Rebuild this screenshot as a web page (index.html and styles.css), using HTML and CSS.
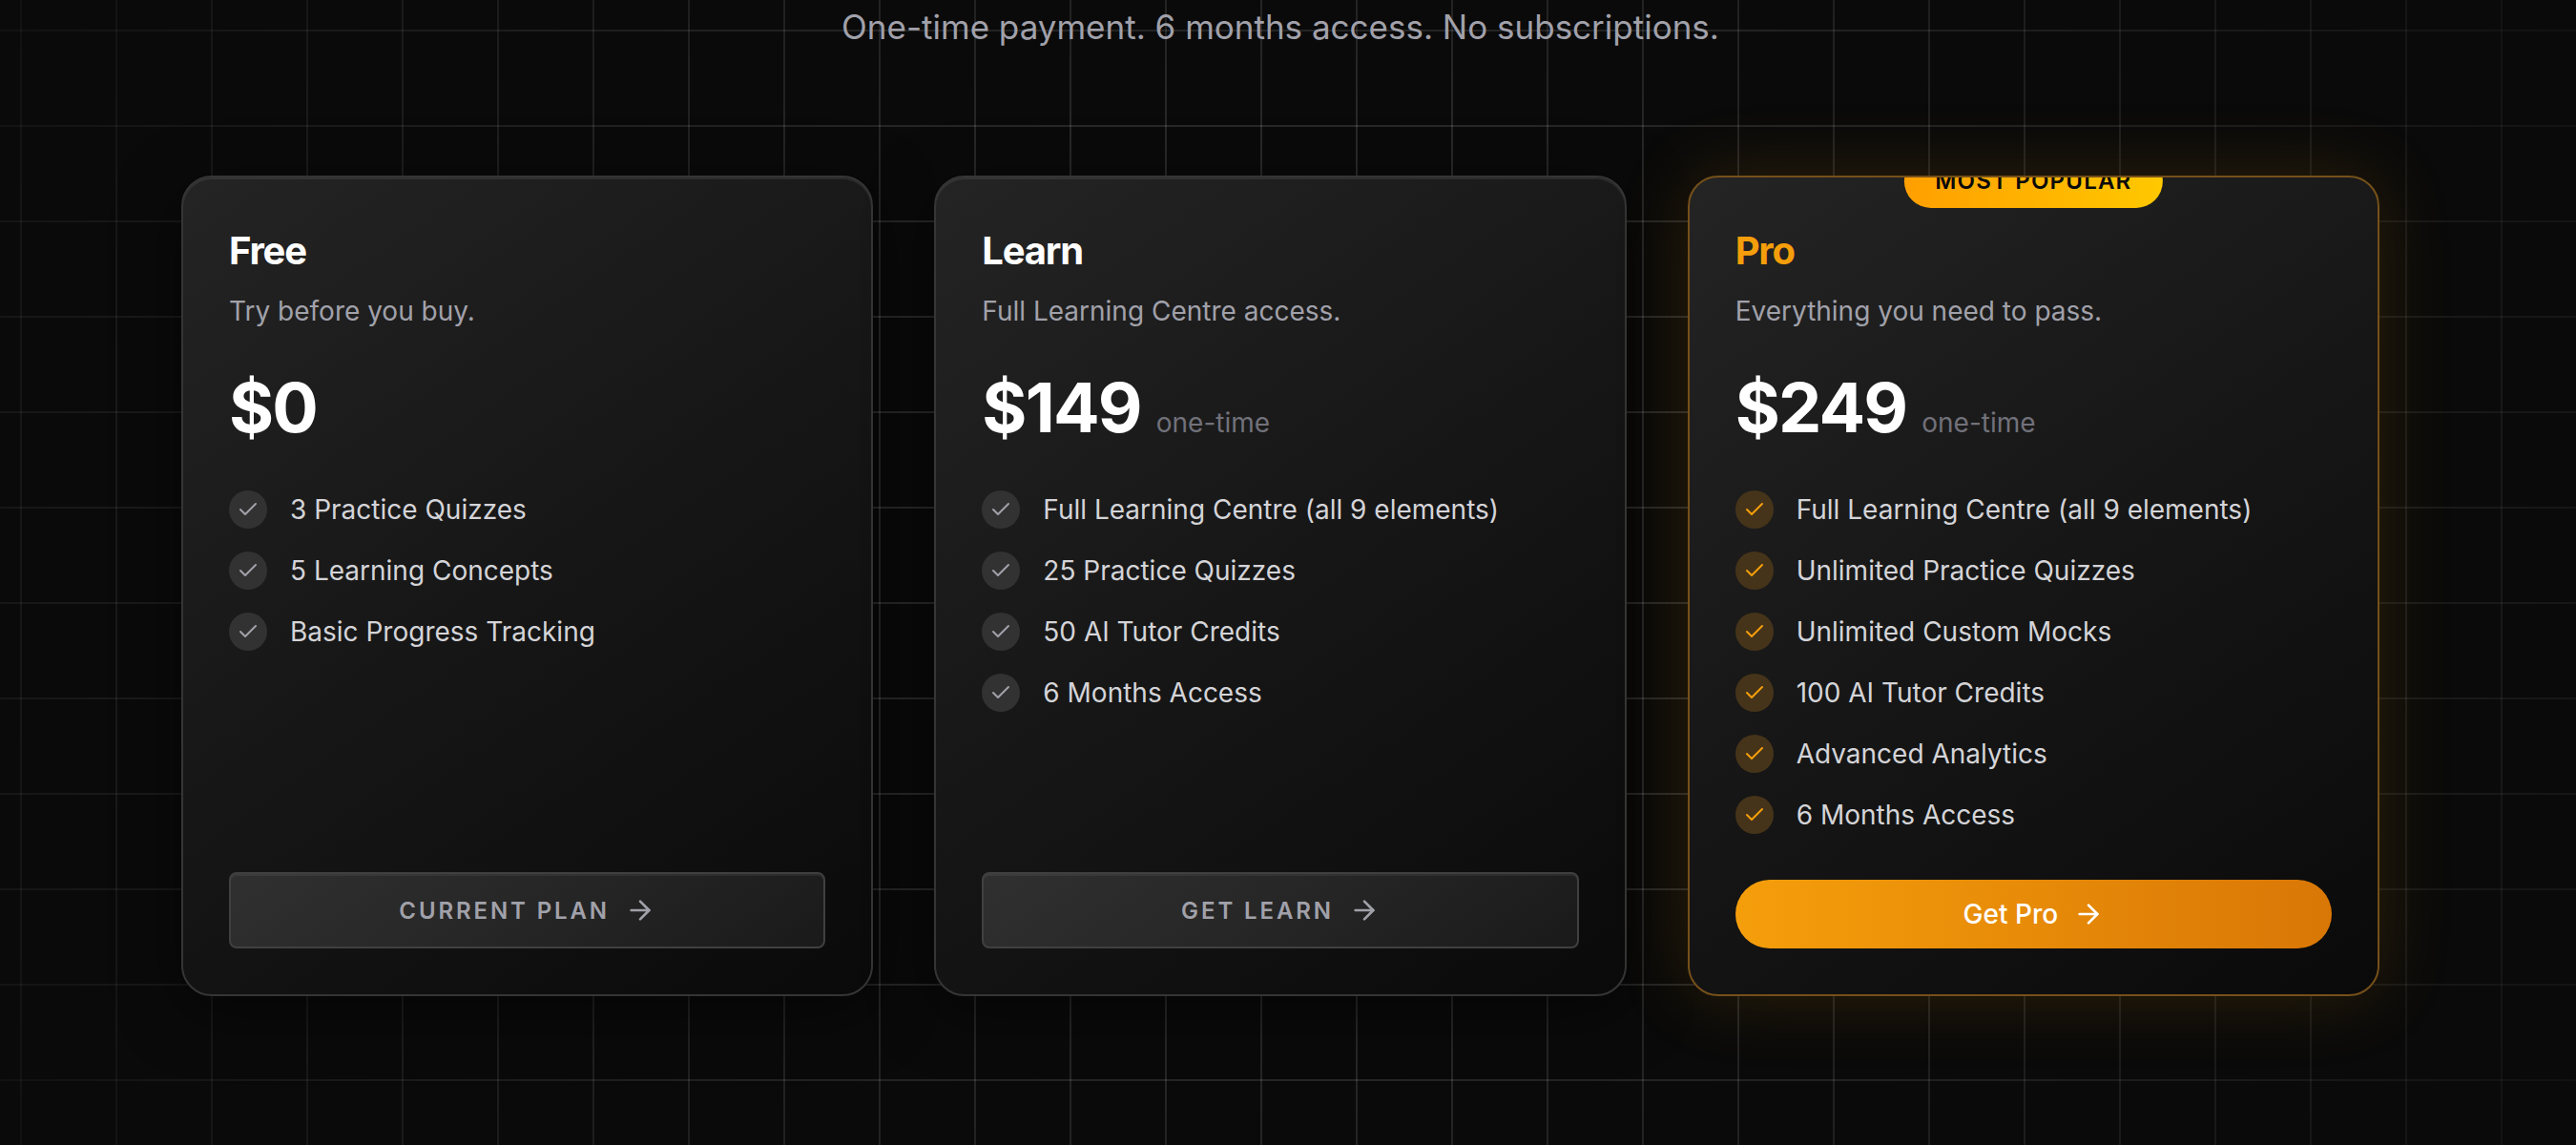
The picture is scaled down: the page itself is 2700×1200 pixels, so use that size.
FILE: index.html
```html
<!DOCTYPE html>
<html lang="en">
  <head>
    <meta charset="utf-8">
    <title>Pricing</title>
    <link rel="stylesheet" href="styles.css">
  </head>
  <body>
    <!-- shared icons -->
    <svg class="sprite" aria-hidden="true">
      <symbol id="check" viewBox="0 0 24 24"><path d="M20 6 9 17l-5-5"/></symbol>
      <symbol id="arrow" viewBox="0 0 24 24"><path d="M5 12h14"/><path d="m12 5 7 7-7 7"/></symbol>
    </svg>
    <main class="pricing">
      <p class="intro">One-time payment. 6 months access. No subscriptions.</p>
      <div class="plans">
        <section class="card">
          <h2>Free</h2>
          <p class="tagline">Try before you buy.</p>
          <p class="price">$0</p>
          <ul class="features">
            <li><span class="tick"><svg><use href="#check"/></svg></span>3 Practice Quizzes</li>
            <li><span class="tick"><svg><use href="#check"/></svg></span>5 Learning Concepts</li>
            <li><span class="tick"><svg><use href="#check"/></svg></span>Basic Progress Tracking</li>
          </ul>
          <button type="button" class="btn">Current Plan <svg><use href="#arrow"/></svg></button>
        </section>
        <section class="card">
          <h2>Learn</h2>
          <p class="tagline">Full Learning Centre access.</p>
          <p class="price">$149 <span>one-time</span></p>
          <ul class="features">
            <li><span class="tick"><svg><use href="#check"/></svg></span>Full Learning Centre (all 9 elements)</li>
            <li><span class="tick"><svg><use href="#check"/></svg></span>25 Practice Quizzes</li>
            <li><span class="tick"><svg><use href="#check"/></svg></span>50 AI Tutor Credits</li>
            <li><span class="tick"><svg><use href="#check"/></svg></span>6 Months Access</li>
          </ul>
          <button type="button" class="btn">Get Learn <svg><use href="#arrow"/></svg></button>
        </section>
        <section class="card pro">
          <div class="badge">Most Popular</div>
          <h2>Pro</h2>
          <p class="tagline">Everything you need to pass.</p>
          <p class="price">$249 <span>one-time</span></p>
          <ul class="features">
            <li><span class="tick"><svg><use href="#check"/></svg></span>Full Learning Centre (all 9 elements)</li>
            <li><span class="tick"><svg><use href="#check"/></svg></span>Unlimited Practice Quizzes</li>
            <li><span class="tick"><svg><use href="#check"/></svg></span>Unlimited Custom Mocks</li>
            <li><span class="tick"><svg><use href="#check"/></svg></span>100 AI Tutor Credits</li>
            <li><span class="tick"><svg><use href="#check"/></svg></span>Advanced Analytics</li>
            <li><span class="tick"><svg><use href="#check"/></svg></span>6 Months Access</li>
          </ul>
          <button type="button" class="btn btn-pro">Get Pro <svg><use href="#arrow"/></svg></button>
        </section>
      </div>
    </main>
  </body>
</html>
```

FILE: styles.css
```css
* {
  box-sizing: border-box;
}
body {
  margin: 0;
  background: #0a0a0a;
  color: #fff;
  font-family: Inter, "Liberation Sans", sans-serif;
  font-size: 28px;
  line-height: 40px;
}
h2, p, ul {
  margin: 0;
  padding: 0;
}
.sprite {
  display: none;
}
svg {
  fill: none;
  stroke: currentColor;
  stroke-linecap: round;
  stroke-linejoin: round;
}

.pricing {
  position: relative;
  min-height: 100vh;
  padding: 0 16px 0 0;
}
/* grid lines, fading out towards the sides */
.pricing::before {
  content: "";
  position: absolute;
  inset: 0;
  background-image:
    linear-gradient(to right, rgba(255, 255, 255, 0.13) 2px, transparent 2px),
    linear-gradient(to bottom, rgba(255, 255, 255, 0.13) 2px, transparent 2px);
  background-size: 100px 100px;
  background-position: 21px 31px;
  -webkit-mask-image: radial-gradient(ellipse 70% 120% at 50% 50%, #000 30%, transparent 100%);
  mask-image: radial-gradient(ellipse 70% 120% at 50% 50%, #000 30%, transparent 100%);
}
.intro {
  position: relative;
  margin-bottom: 128px;
  color: #a1a1aa;
  font-size: 35px;
  line-height: 56px;
  text-align: center;
}
.plans {
  position: relative;
  display: grid;
  grid-template-columns: repeat(3, 1fr);
  gap: 64px;
  max-width: 2304px;
  margin: 0 auto;
}

.card {
  position: relative;
  display: flex;
  flex-direction: column;
  padding: 48px;
  overflow: hidden;
  border: 2px solid #353535;
  border-radius: 32px;
  background: linear-gradient(145deg, #242424 0%, #161616 50%, #0a0a0a 100%);
  box-shadow: 0 16px 64px rgba(0, 0, 0, 0.5), inset 0 2px 0 rgba(255, 255, 255, 0.08);
}
.card h2 {
  margin-bottom: 14px;
  font-size: 40px;
  font-weight: 700;
  line-height: 58px;
  letter-spacing: -0.03em;
}
.tagline {
  margin-bottom: 40px;
  color: #a1a1aa;
}
.price {
  display: flex;
  align-items: baseline;
  gap: 16px;
  margin-bottom: 46px;
  font-size: 72px;
  font-weight: 700;
  line-height: 82px;
  letter-spacing: -0.025em;
}
.price span {
  color: #71717a;
  font-size: 28px;
  font-weight: 400;
  line-height: 40px;
  letter-spacing: normal;
}
.features {
  display: flex;
  flex-direction: column;
  gap: 24px;
  margin-bottom: 48px;
  list-style: none;
  color: #d4d4d8;
}
.features li {
  display: flex;
  align-items: center;
  gap: 24px;
}
.tick {
  display: flex;
  align-items: center;
  justify-content: center;
  width: 40px;
  height: 40px;
  border-radius: 50%;
  background: #323232;
  color: #a1a1aa;
}
.tick svg {
  width: 24px;
  height: 24px;
  stroke-width: 2;
}

.btn {
  display: flex;
  align-items: center;
  justify-content: center;
  gap: 16px;
  height: 80px;
  margin-top: auto;
  border: 2px solid #404040;
  border-radius: 8px;
  background: linear-gradient(145deg, #303030 0%, #262626 50%, #1a1a1a 100%);
  box-shadow: inset 0 2px 0 rgba(255, 255, 255, 0.06);
  color: #a1a1aa;
  font-family: inherit;
  font-size: 24px;
  font-weight: 600;
  letter-spacing: 0.12em;
  text-transform: uppercase;
}
.btn svg {
  width: 32px;
  height: 32px;
  stroke-width: 2;
}

.pro {
  border-color: #75501a;
  box-shadow: 0 0 80px rgba(245, 158, 11, 0.15);
}
.pro h2 {
  color: #f59e0b;
}
.pro .tick {
  background: #46341a;
  color: #f59e0b;
}
.badge {
  position: absolute;
  top: -24px;
  left: 50%;
  transform: translateX(-50%);
  padding: 8px 32px;
  border-radius: 28px;
  background: linear-gradient(to right, #ff9f00, #ffc800);
  color: #0a0a0a;
  font-size: 24px;
  font-weight: 600;
  letter-spacing: 0.05em;
  text-transform: uppercase;
  white-space: nowrap;
}
.btn-pro {
  height: 72px;
  border: 0;
  border-radius: 36px;
  background: linear-gradient(to right, #f59e0b, #d97706);
  box-shadow: none;
  color: #fff;
  font-size: 28px;
  font-weight: 500;
  letter-spacing: normal;
  text-transform: none;
}
```
